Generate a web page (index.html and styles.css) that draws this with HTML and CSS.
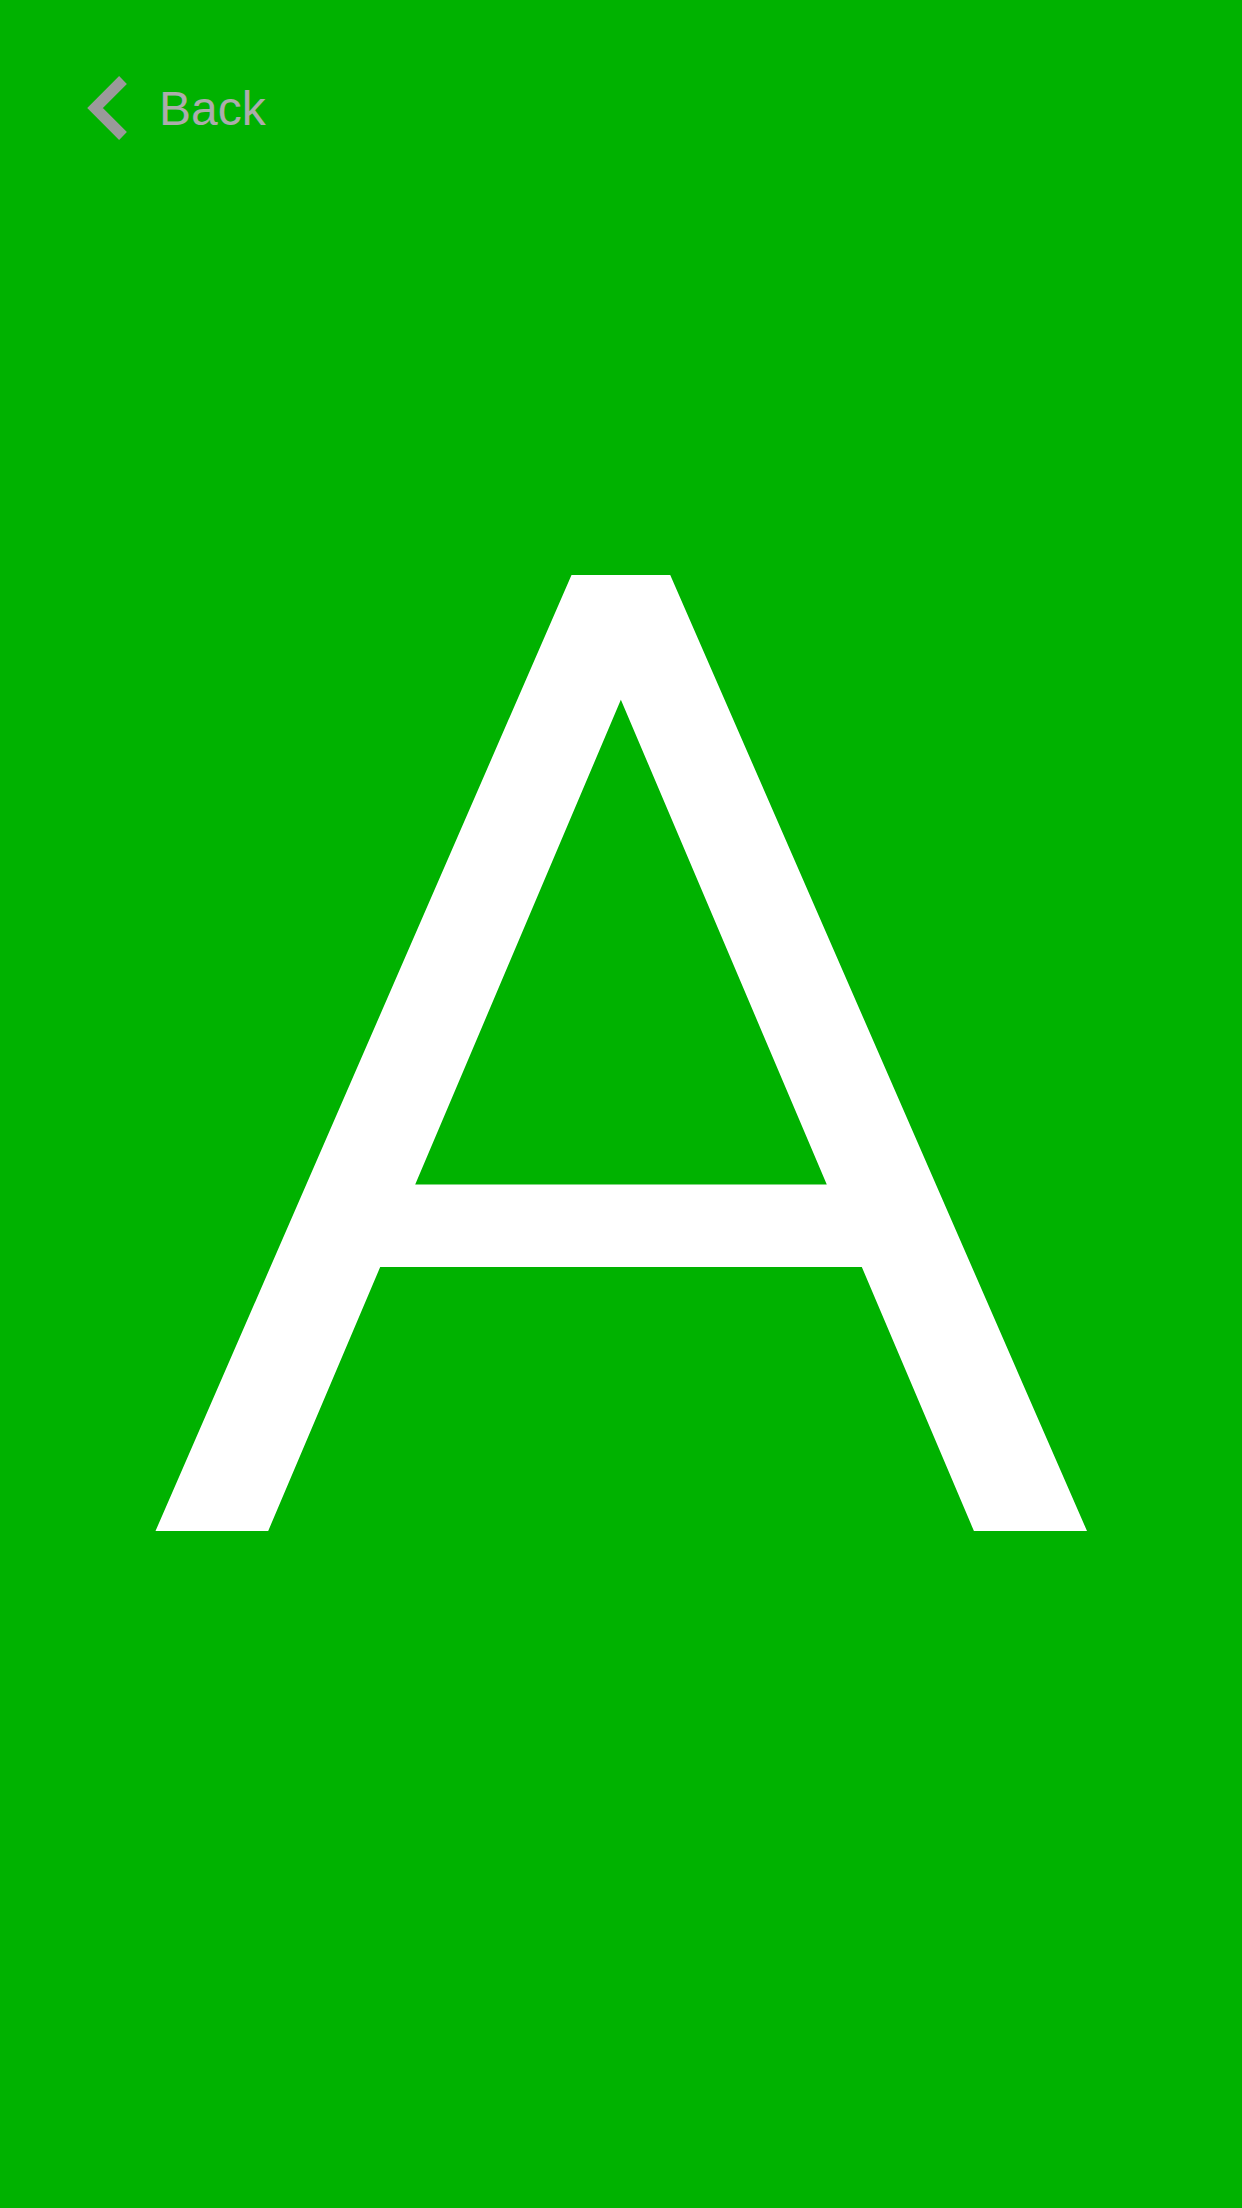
FILE: index.html
```html
<!DOCTYPE html>
<html lang="en">
<head>
<meta charset="utf-8">
<title>A</title>
<link rel="stylesheet" href="styles.css">
</head>
<body>
<div class="screen">
  <header class="nav">
    <a class="back" href="#">
      <svg class="chevron" width="52" height="72" viewBox="0 0 52 72" aria-hidden="true">
        <polyline points="41,8 13,36 41,64" fill="none" stroke="#9a9a9a" stroke-width="11" stroke-linejoin="miter" stroke-linecap="butt"/>
      </svg>
      <span class="back-label">Back</span>
    </a>
  </header>
  <main class="stage">
    <div class="glyph-row"><span class="glyph">A</span></div>
  </main>
</div>
</body>
</html>
```
FILE: styles.css
```css
html, body {
  margin: 0;
  padding: 0;
  background: #00b200;
}
.screen {
  width: 1242px;
  height: 2208px;
  display: flex;
  flex-direction: column;
  background: #00b200;
  overflow: hidden;
}
.nav {
  display: flex;
  align-items: center;
  padding: 72px 0 0 82px;
}
.back {
  display: flex;
  align-items: center;
  gap: 25px;
  text-decoration: none;
}
.chevron {
  display: block;
  flex: none;
}
.back-label {
  font-family: "Liberation Sans", Arial, sans-serif;
  font-size: 48px;
  color: #acacac;
}
.stage {
  padding-top: 265px;
}
.glyph-row {
  text-align: center;
  font-family: Roboto, "Liberation Sans", sans-serif;
  font-weight: 300;
  font-size: 1325px;
  line-height: 1;
  color: #ffffff;
}
.glyph {
  display: inline-block;
  -webkit-text-stroke: 14px #ffffff;
  transform: scaleX(1.152);
}
```
